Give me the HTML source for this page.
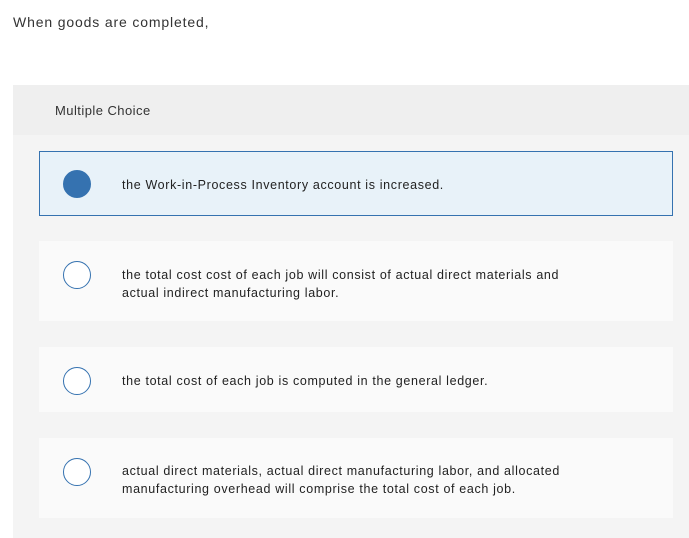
<!DOCTYPE html>
<html><head><style>
body{margin:0;width:689px;height:538px;background:#fff;font-family:"Liberation Sans",Arial,sans-serif;color:#222;position:relative;overflow:hidden}
.q{position:absolute;left:13px;top:14px;font-size:14px;color:#333;letter-spacing:0.85px}
.box{position:absolute;left:13px;top:85px;width:676px;height:453px;background:#f4f4f4}
.hd{position:absolute;left:0;top:0;width:676px;height:50px;background:#efefef}
.hd span{position:absolute;left:42px;top:18px;font-size:13px;color:#333;letter-spacing:0.45px}
.opt{position:absolute;left:39px;width:634px;background:#fafafa}
.opt .r{position:absolute;left:24px;width:28px;height:28px;border:1.5px solid #3572b0;border-radius:50%;background:#fff;box-sizing:border-box}
.opt .t{position:absolute;left:83px;font-size:12.5px;line-height:18px;color:#222;letter-spacing:0.65px}
.sel{background:#e8f2f9;border:1px solid #3572b0;box-sizing:border-box}
.sel .r{background:#3572b0}
</style></head><body>
<div class="q">When goods are completed,</div>
<div class="box"><div class="hd"><span>Multiple Choice</span></div></div>
<div class="opt sel" style="top:151px;height:65px"><div class="r" style="left:23px;top:18px"></div><div class="t" style="left:82px;top:24px">the Work-in-Process Inventory account is increased.</div></div>
<div class="opt" style="top:241px;height:80px"><div class="r" style="top:20px"></div><div class="t" style="top:25px">the total cost cost of each job will consist of actual direct materials and<br>actual indirect manufacturing labor.</div></div>
<div class="opt" style="top:347px;height:65px"><div class="r" style="top:20px"></div><div class="t" style="top:25px">the total cost of each job is computed in the general ledger.</div></div>
<div class="opt" style="top:438px;height:80px"><div class="r" style="top:20px"></div><div class="t" style="top:24px">actual direct materials, actual direct manufacturing labor, and allocated<br>manufacturing overhead will comprise the total cost of each job.</div></div>
</body></html>
